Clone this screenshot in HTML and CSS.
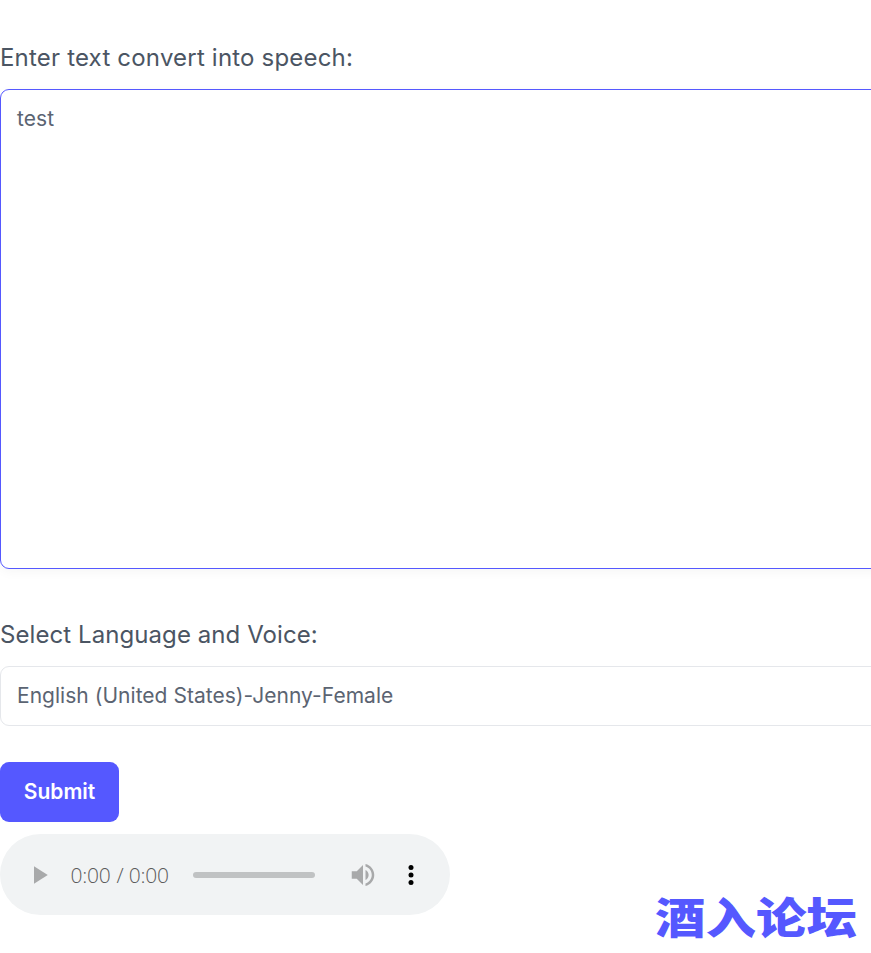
FILE: index.html
```html
<!DOCTYPE html>
<html lang="en">
<head>
<meta charset="utf-8">
<title>Text to Speech</title>
<link rel="stylesheet" href="styles.css">
</head>
<body>
<main class="page">
  <form class="tts-form">
    <div class="field field-text">
      <label class="label" for="text">Enter text convert into speech:</label>
      <textarea class="textarea" id="text">test</textarea>
    </div>
    <div class="field field-voice">
      <label class="label" for="voice">Select Language and Voice:</label>
      <select class="select" id="voice">
        <option>English (United States)-Jenny-Female</option>
      </select>
    </div>
    <button class="submit" type="button">Submit</button>
  </form>
  <audio class="player" controls></audio>
</main>
<div class="watermark">酒入论坛</div>
</body>
</html>
```
FILE: styles.css
```css
* { box-sizing: border-box; }
html, body { margin: 0; height: 100%; overflow: hidden; background: #fff; }
body { font-family: Inter, "Liberation Sans", sans-serif; color: #4b5563; position: relative; }
.page { width: 760px; padding-top: 26.667px; zoom: 1.5; }
.tts-form { display: flex; flex-direction: column; align-items: flex-start; }
.field { width: 100%; display: flex; flex-direction: column; }
.field-text { margin-bottom: 32px; }
.field-voice { margin-bottom: 24px; }
.label { font-size: 16px; line-height: 24px; font-weight: 400; color: #4b5563; margin-bottom: 8.667px; font-optical-sizing: none; }
.field-text .label { letter-spacing: .129px; }
.field-voice .label { letter-spacing: .05px; }
.textarea {
  display: block; width: 100%; height: 320px; padding: 8px 10.667px; resize: none; outline: none;
  font: 400 14px/22px Inter, "Liberation Sans", sans-serif; letter-spacing: .03px; color: #5b6472; background: #fff;
  border: 1px solid #5558ff; border-radius: 6px; box-shadow: 0 2px 8px rgba(0,0,0,.04);
}
.select {
  display: block; width: 100%; height: 40px; padding: 0 10.667px 1px; appearance: none; outline: none;
  font: 400 14px/22px Inter, "Liberation Sans", sans-serif; letter-spacing: .02px; color: #5b6472; background: #fff;
  border: 1px solid #e5e7eb; border-radius: 6px;
}
.submit {
  height: 40px; width: 79.33px; padding: 0 0 1px; border: 0; border-radius: 6px; background: #5558ff; color: #fff;
  font: 600 14px/22px Inter, "Liberation Sans", sans-serif;
}
.player { display: block; width: 300px; height: 54px; margin-top: 8px; }
.player::-webkit-media-controls-current-time-display,
.player::-webkit-media-controls-time-remaining-display {
  font-family: "Open Sans", sans-serif; font-weight: 300; color: #444; letter-spacing: -.15px;
}
.watermark {
  position: absolute; left: 655px; top: 885px; font: 900 50.5px/60px "Noto Sans CJK SC", sans-serif;
  color: #5558ff; white-space: nowrap; transform: scaleY(.86);
}
```
